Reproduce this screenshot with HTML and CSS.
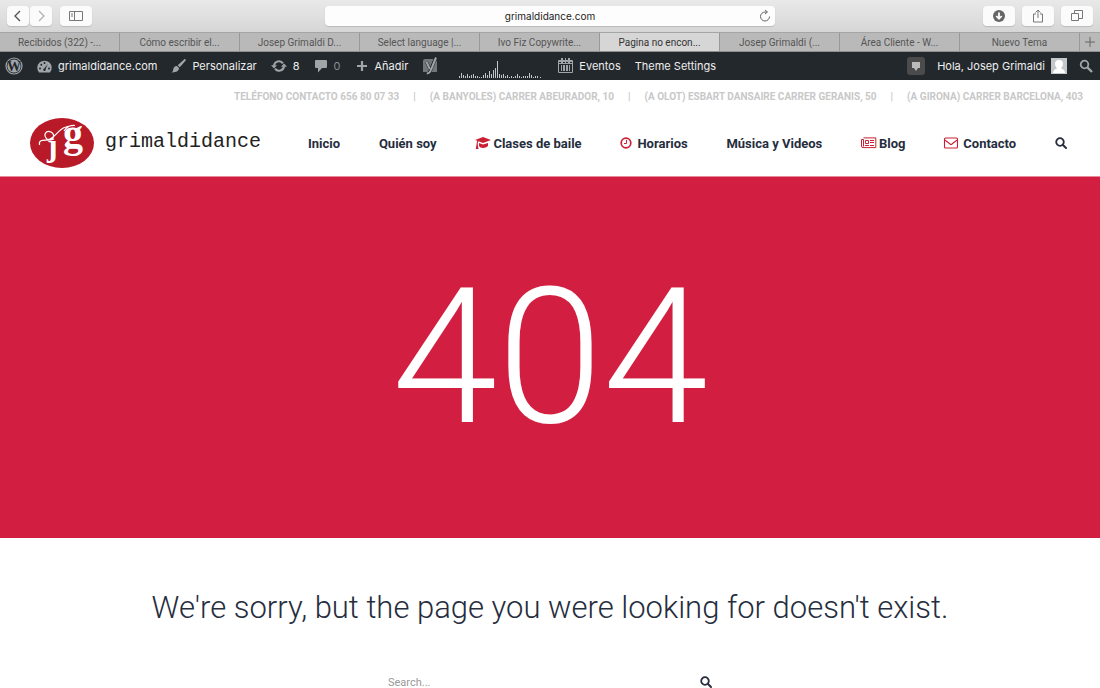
FILE: index.html
```html
<!DOCTYPE html>
<html lang="es">
<head>
  <meta charset="UTF-8">
  <meta name="viewport" content="width=device-width, initial-scale=1.0">
  <title>Pagina no encontrada - grimaldidance</title>
  <link rel="stylesheet" href="styles.css">
</head>
<body>
  <!-- Browser window -->
  <div class="toolbar">
    <div class="tools">
      <div class="pair">
        <button class="tool small" aria-label="Atrás"><svg width="12" height="12" viewBox="0 0 12 12"><path d="M8 1 3 6l5 5" stroke="#555" stroke-width="1.4"/></svg></button>
        <button class="tool small" aria-label="Adelante"><svg width="12" height="12" viewBox="0 0 12 12"><path d="m4 1 5 5-5 5" stroke="#b5b5b5" stroke-width="1.4"/></svg></button>
      </div>
      <button class="tool" aria-label="Barra lateral"><svg width="14" height="12" viewBox="0 0 14 12"><path d="M.5 1.500h13v9H.5zM5.500 1.500v9M2 4h2M2 6h2" stroke="#777"/></svg></button>
    </div>
    <div class="address">
      <input type="text" value="grimaldidance.com" aria-label="Dirección">
      <button class="reload" aria-label="Recargar"><svg width="12" height="12" viewBox="0 0 12 12"><path d="M10.500 6.500a4.500 4.500 0 1 1-4.500-4.500h2M6 0l2.500 2L6 4" stroke="#666"/></svg></button>
    </div>
    <div class="tools right">
      <button class="tool" aria-label="Descargas"><svg width="14" height="14" viewBox="0 0 14 14"><circle cx="7" cy="7" r="6" fill="#666"/><path d="M7 3.500v6M4.300 7 7 9.800 9.700 7" stroke="#fff" stroke-width="1.800"/></svg></button>
      <button class="tool" aria-label="Compartir"><svg width="12" height="14" viewBox="0 0 12 14"><path d="M4 5H1.500v8h9V5H8M6 9V1M3.500 3.500 6 1l2.500 2.500" stroke="#777"/></svg></button>
      <button class="tool" aria-label="Pestañas"><svg width="12" height="12" viewBox="0 0 12 12"><path d="M.5 3.500h7v7h-7zM3.500 3V.5h8v8H8" stroke="#777"/></svg></button>
    </div>
  </div>
  <div class="tabs">
    <a href="#">Recibidos (322) -...</a>
    <a href="#">Cómo escribir el...</a>
    <a href="#">Josep Grimaldi D...</a>
    <a href="#">Select language |...</a>
    <a href="#">Ivo Fiz Copywrite...</a>
    <a href="#" class="active">Pagina no encon...</a>
    <a href="#">Josep Grimaldi (...</a>
    <a href="#">Área Cliente - W...</a>
    <a href="#">Nuevo Tema</a>
    <button class="newtab" aria-label="Nueva pestaña"><svg width="10" height="10" viewBox="0 0 10 10"><path d="M5 0v10M0 5h10" stroke="#666"/></svg></button>
  </div>

  <!-- WordPress admin bar -->
  <div class="adminbar">
    <a href="#" aria-label="WordPress"><svg width="18" height="18" viewBox="0 0 18 18"><circle cx="9" cy="9" r="8" stroke="#a0a5aa" stroke-width="1.200"/><circle cx="9" cy="9" r="6.600" fill="#a0a5aa"/><text x="9" y="14" text-anchor="middle" class="wp">W</text></svg></a>
    <a href="#"><svg width="15" height="13" viewBox="0 0 15 13"><path fill="#a0a5aa" d="M2 12.500a7.200 7.200 0 1 1 11 0z"/><g fill="#23282d"><circle cx="3" cy="8.500" r="1"/><circle cx="4.300" cy="4.700" r="1"/><circle cx="7.500" cy="3" r="1"/><circle cx="12" cy="8.500" r="1"/><path d="m10.800 4-2.200 5a1.300 1.300 0 1 1-1.400-.6z"/></g></svg>grimaldidance.com</a>
    <a href="#"><svg width="15" height="14" viewBox="0 0 15 14"><path fill="#a0a5aa" d="M14.500.3c.6.500.2 1.300-.4 2L8.800 8.200 6.700 6.300 12.500.9c.6-.5 1.400-1.100 2-.6zM5.900 7.100l2.100 2c.1 2.800-2.600 4.600-7.600 4.400 2-1 1.400-2.400 2.200-4.300.6-1.500 1.700-2.200 3.300-2.100z"/></svg>Personalizar</a>
    <a href="#"><svg width="16" height="14" viewBox="0 0 16 14"><path stroke="#a0a5aa" stroke-width="2" d="M3 6.500a5 5 0 0 1 9-2.200M13 7.500a5 5 0 0 1-9 2.200"/><path fill="#a0a5aa" d="M0 6.200h6L3 9.500zM10 7.800h6L13 4.500z"/></svg>8</a>
    <a href="#" class="dim"><svg width="14" height="14" viewBox="0 0 14 14"><path fill="#a0a5aa" d="M2 1h10a1 1 0 0 1 1 1v6a1 1 0 0 1-1 1H8l-4 4.500V9H2a1 1 0 0 1-1-1V2a1 1 0 0 1 1-1z"/></svg>0</a>
    <a href="#"><svg width="14" height="12" viewBox="0 0 14 12"><path stroke="#a0a5aa" stroke-width="2.200" d="M7 1v10M2 6h10"/></svg>Añadir</a>
    <a href="#" aria-label="SEO"><svg width="16" height="18" viewBox="0 0 16 18"><path fill="#72777c" d="M3 2h8.500L6 15H1V4a2 2 0 0 1 2-2zM13.500 3q1.500.3 1.500 2v10H8z"/><path d="m14 .5-4.700 11.500q-1.600 4.500-4.500 4.500M4.500 5l3.300 7" stroke="#23282d" stroke-width="3"/><path d="m14 .5-4.700 11.500q-1.600 4.500-4.500 4.500M4.500 5l3.300 7" stroke="#a0a5aa" stroke-width="2"/></svg></a>
    <a href="#" class="stats" aria-label="Estadísticas"><svg width="84" height="18" viewBox="0 0 84 18"><path stroke="#c3c7ca" d="M1.500 18v-2M3.500 18v-5M5.500 18v-3M7.500 18v-2M9.500 18v-4M11.500 18v-2M13.500 18v-3M15.500 18v-4M17.500 18v-2M19.500 18v-2M21.500 18v-1M23.500 18v-1M25.500 18v-3M27.500 18v-5M29.500 18v-3M31.500 18v-7M33.500 18v-4M35.500 18v-8M37.500 18v-10M39.500 18V1M41.500 18v-4M43.500 18v-3M45.500 18v-4M47.500 18v-2M49.500 18v-3M51.500 18v-1M53.500 18v-2M55.500 18v-1M57.500 18v-2M59.500 18v-4M61.500 18v-2M63.500 18v-1M65.500 18v-2M67.500 18v-2M69.500 18v-2M71.500 18v-5M73.500 18v-3M75.500 18v-1M77.500 18v-2M79.500 18v-2M82.500 18v-1"/></svg></a>
    <a href="#"><svg width="15" height="16" viewBox="0 0 15 16"><path stroke="#a0a5aa" d="M.5 2.500h14v12H.5zM1 5.500h13M1 3.500h13"/><path fill="#a0a5aa" d="M3 7h1v6H3zM5 7h2v6H5zM8 7h2v6H8zM11 7h1v6h-1zM3 0h2v5H3zM10 0h2v5h-2zM7 0h1v5H7z"/></svg>Eventos</a>
    <a href="#">Theme Settings</a>
    <a href="#" class="notes" aria-label="Avisos"><svg width="10" height="11" viewBox="0 0 10 11"><path fill="#bbb" d="M1 1h8v6H7l-2 3-2-3H1z"/></svg></a>
    <a href="#" class="user">Hola, Josep Grimaldi<svg width="16" height="16" viewBox="0 0 16 16"><path fill="#c5c8ca" d="M0 0h16v16H0z"/><path fill="#fff" d="M2 15q0-3.500 4-4.500Q4 8.500 4 6q0-4 4-4t4 4q0 2.500-2 4.500 4 1 4 4.500z"/></svg></a>
    <a href="#" aria-label="Buscar"><svg width="14" height="14" viewBox="0 0 14 14"><circle cx="5.500" cy="5.500" r="3.800" stroke="#a0a5aa" stroke-width="1.800"/><path d="m8 8 5 5" stroke="#a0a5aa" stroke-width="2.400"/></svg></a>
  </div>

  <!-- Site header -->
  <header>
    <ul class="contact">
      <li>TELÉFONO CONTACTO 656 80 07 33</li>
      <li>(A BANYOLES) CARRER ABEURADOR, 10</li>
      <li>(A OLOT) ESBART DANSAIRE CARRER GERANIS, 50</li>
      <li>(A GIRONA) CARRER BARCELONA, 403</li>
    </ul>
    <div class="main">
      <a href="#" class="logo">
        <svg width="64" height="50" viewBox="0 0 64 50">
          <ellipse cx="32" cy="25" rx="32" ry="25" fill="#b91a27"/>
          <text x="17" y="38" class="letter-j">ȷ</text>
          <text x="33" y="29" class="letter-g">g</text>
          <path d="M9.500 27C8 19 18 24 24 21M18 22C12 17 16 12 21 14C26 17 23 23 18 21.500C27 20 28 7 45 7.500Q38 7 34 13" stroke="#fff" stroke-width="1.200"/>
        </svg>
        <span>grimaldidance</span>
      </a>
      <nav>
        <a href="#">Inicio</a>
        <a href="#">Quién soy</a>
        <a href="#" class="tight"><svg width="16" height="12" viewBox="0 0 16 12"><path fill="#cb2034" d="m8 0 8 3-8 3-4.500-1.700Q2.700 5 2.700 7L3.500 12H.8l.8-5q0-2 .7-3.200L0 3zM4 6l4 1.500L13 6v3q-2 2-5 2T4 9z"/></svg>Clases de baile</a>
        <a href="#"><svg width="12" height="12" viewBox="0 0 12 12"><circle cx="6" cy="6" r="4.800" stroke="#cb2034" stroke-width="1.700"/><path d="M6.500 3v3.500H4" stroke="#cb2034"/></svg>Horarios</a>
        <a href="#">Música y Videos</a>
        <a href="#" class="tight"><svg width="16" height="12" viewBox="0 0 16 12"><path stroke="#cb2034" d="M2.500.9h12.300v9.700H2q-1.500 0-1.500-1.500V2.500h2v7M4.500 3.500h3v3h-3zM9 3.500h4M9 5.500h4M4 8.500h4M9 8.500h4"/></svg>Blog</a>
        <a href="#"><svg width="14" height="12" viewBox="0 0 14 12"><path stroke="#cb2034" stroke-width="1.100" d="M1.500 1h11a1 1 0 0 1 1 1v8a1 1 0 0 1-1 1h-11a1 1 0 0 1-1-1V2a1 1 0 0 1 1-1zM.7 3Q4 5.200 6 7q1 .8 2 0 2-1.800 5.300-4"/></svg>Contacto</a>
        <a href="#" aria-label="Buscar"><svg width="12" height="12" viewBox="0 0 12 12"><circle cx="5" cy="5" r="3.800" stroke="#262d3d" stroke-width="1.800"/><path d="m8 8 3 3" stroke="#262d3d" stroke-width="2" stroke-linecap="round"/></svg></a>
      </nav>
    </div>
  </header>

  <section class="hero">
    <h1>404</h1>
  </section>

  <main>
    <h2>We're sorry, but the page you were looking for doesn't exist.</h2>
    <form class="search">
      <input type="text" placeholder="Search..." aria-label="Search">
      <button type="submit" aria-label="Search"><svg width="12" height="12" viewBox="0 0 12 12"><circle cx="5" cy="5" r="3.800" stroke="#262d3d" stroke-width="1.800"/><path d="m8 8 3 3" stroke="#262d3d" stroke-width="2" stroke-linecap="round"/></svg></button>
    </form>
  </main>
</body>
</html>
```
FILE: styles.css
```css
* {
  box-sizing: border-box;
}
body {
  margin: 0;
  background: #fff;
  color: #262d3d;
  font-family: Roboto, sans-serif;
}
a {
  color: inherit;
  text-decoration: none;
}
button {
  display: flex;
  align-items: center;
  justify-content: center;
  padding: 0;
  border: none;
  background: none;
  cursor: pointer;
}
svg {
  fill: none;
  flex-shrink: 0;
  overflow: visible;
}

/* browser */
.toolbar {
  display: grid;
  grid-template-columns: 1fr 450px 1fr;
  align-items: center;
  height: 32px;
  padding: 0 7px;
  background: linear-gradient(#e9e9e9, #d6d6d6);
  font-family: Inter, sans-serif;
}
.tools {
  display: flex;
  gap: 8px;
}
.tools.right {
  justify-content: flex-end;
  gap: 7px;
}
.pair {
  display: flex;
  gap: 1px;
}
.tool {
  width: 32px;
  height: 20px;
  border-radius: 4px;
  background: #fbfbfb;
  box-shadow: 0 1px 1px #bbb;
}
.tool.small {
  width: 22px;
}
.address {
  position: relative;
}
.address input {
  display: block;
  width: 100%;
  height: 20px;
  padding: 0 24px;
  border: none;
  border-radius: 4px;
  background: #fdfdfd;
  box-shadow: 0 1px 1px #bbb;
  font-family: inherit;
  font-size: 10px;
  text-align: center;
  color: #222;
}
.reload {
  position: absolute;
  top: 4px;
  right: 4px;
}
.tabs {
  display: flex;
  height: 20px;
  border-top: 1px solid #a5a5a5;
  border-bottom: 1px solid #8f8f8f;
  background: #b9b9b9;
  font-size: 10px;
  line-height: 19px;
  text-align: center;
  color: #555;
}
.tabs a {
  flex: 1;
  border-right: 1px solid #999;
  white-space: nowrap;
}
.tabs .active {
  background: #d6d6d6;
  color: #333;
}
.newtab {
  width: 20px;
}

/* admin bar */
.adminbar {
  display: flex;
  align-items: center;
  gap: 14px;
  height: 28px;
  padding: 0 7px 0 5px;
  background: #23282d;
  color: #eee;
  font-family: Inter, sans-serif;
  font-size: 11px;
  white-space: nowrap;
}
.adminbar a {
  display: flex;
  align-items: center;
  gap: 6px;
}
.adminbar .dim {
  color: #888d92;
}
.adminbar .stats {
  align-self: flex-end;
  margin: 0 2px 2px 6px;
}
.adminbar .notes {
  justify-content: center;
  width: 18px;
  height: 18px;
  margin-left: auto;
  border-radius: 3px;
  background: #4b4b4b;
}
.adminbar .user {
  margin: 0 -2px;
}
.wp {
  font: bold 14px "Liberation Serif", serif;
  fill: #23282d;
}

/* site header */
header {
  height: 97px;
  border-bottom: 1px solid #e58a98;
}
.contact {
  display: flex;
  justify-content: flex-end;
  margin: 0;
  padding: 0 17px;
  list-style: none;
  font-size: 10px;
  font-weight: bold;
  line-height: 34px;
  color: #c8c8c8;
}
.contact li + li::before {
  content: "|";
  margin: 0 14px;
}
.main {
  display: flex;
  justify-content: space-between;
  align-items: center;
  height: 58px;
  padding: 0 33px 0 30px;
}
.logo {
  display: flex;
  align-items: center;
  gap: 11px;
  font-family: "Liberation Mono", monospace;
  font-size: 20px;
  color: #222;
}
.logo span {
  padding-bottom: 4px;
}
.letter-j, .letter-g {
  font-family: "Liberation Serif", serif;
  font-weight: bold;
  fill: #fff;
}
.letter-j {
  font-size: 32px;
}
.letter-g {
  font-size: 40px;
}
nav {
  display: flex;
  justify-content: space-between;
  flex: 1;
  margin-left: 47px;
  font-size: 13px;
  font-weight: bold;
}
nav a {
  display: flex;
  align-items: center;
  gap: 5px;
  white-space: nowrap;
}
nav .tight {
  gap: 2px;
}

/* 404 */
.hero {
  padding: 69px 0;
  background: #d21f41;
}
.hero h1 {
  margin: 0;
  font-size: 190px;
  font-weight: 300;
  line-height: 223px;
  text-align: center;
  color: #fff;
}
main {
  padding: 48px 20px 60px;
}
main h2 {
  margin: 0;
  font-size: 31px;
  font-weight: 300;
  line-height: 44px;
  text-align: center;
}
.search {
  display: flex;
  align-items: center;
  width: 324px;
  height: 32px;
  margin: 36px auto 0;
}
.search input {
  flex: 1;
  padding: 0;
  border: none;
  outline: none;
  font-family: inherit;
  font-size: 11px;
}
.search input::placeholder {
  color: #999;
}
```
